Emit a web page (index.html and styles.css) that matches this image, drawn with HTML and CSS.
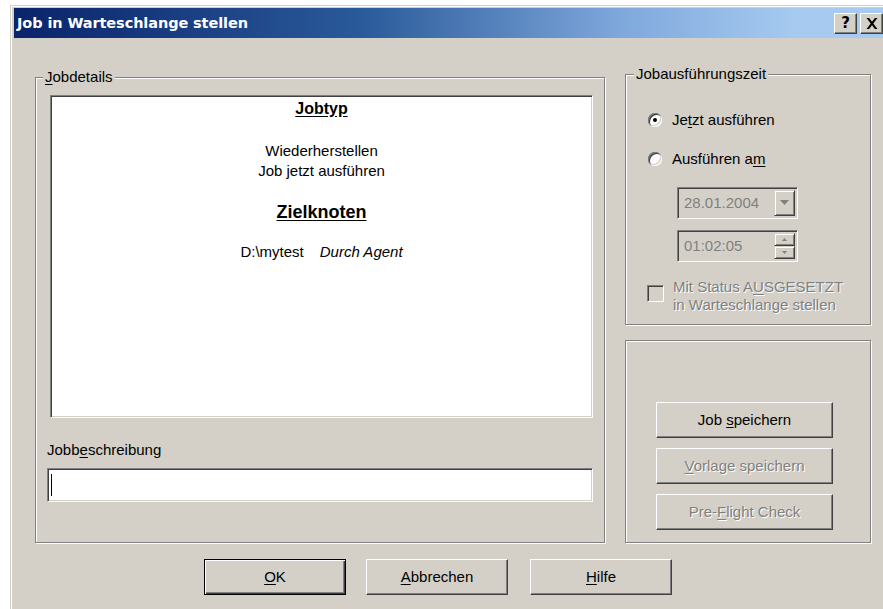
FILE: index.html
```html
<!DOCTYPE html>
<html lang="de">
<head>
<meta charset="utf-8">
<title>Job in Warteschlange stellen</title>
<link rel="stylesheet" href="styles.css">
</head>
<body>
<div class="dialog">
  <div class="titlebar">
    <span class="title">Job in Warteschlange stellen</span>
    <div class="caption-btns">
      <span class="cbtn">?</span>
      <span class="cbtn">
        <svg width="12" height="11" viewBox="0 0 12 11"><path d="M0.5 0h2.6L6 3.7 8.9 0h2.6L7.3 5.5 11.5 11H8.9L6 7.3 3.1 11H0.5l4.2-5.5z" fill="#000"/></svg>
      </span>
    </div>
  </div>

  <div class="client">
    <div class="main">
      <fieldset class="group details">
        <legend><u>J</u>obdetails</legend>
        <div class="summary">
          <div class="heading">Jobtyp</div>
          <div class="line first">Wiederherstellen</div>
          <div class="line">Job jetzt ausführen</div>
          <div class="heading big">Zielknoten</div>
          <div class="line target">D:\mytest<em class="agent">Durch Agent</em></div>
        </div>
        <div class="desc-label">Jobb<u>e</u>schreibung</div>
        <div class="textbox"><span class="caret"></span></div>
      </fieldset>

      <div class="side">
        <fieldset class="group schedule">
          <legend>Jobausführungszeit</legend>
          <div class="opt"><span class="radio checked"></span><span>Je<u>t</u>zt ausführen</span></div>
          <div class="opt second"><span class="radio"></span><span>Ausführen a<u>m</u></span></div>
          <div class="field date">
            <span class="value">28.01.2004</span>
            <span class="dropbtn">
              <svg width="9" height="6" viewBox="0 0 9 6"><path d="M0 0h9L4.5 5z" fill="#808080"/></svg>
            </span>
          </div>
          <div class="field time">
            <span class="value">01:02:05</span>
            <span class="spin">
              <span class="spinbtn"><svg width="5" height="3" viewBox="0 0 5 3"><path d="M2.5 0L5 3H0z" fill="#808080"/></svg></span>
              <span class="spinbtn"><svg width="5" height="3" viewBox="0 0 5 3"><path d="M0 0h5L2.5 3z" fill="#808080"/></svg></span>
            </span>
          </div>
          <div class="check-row">
            <span class="checkbox"></span>
            <span class="disabled">Mit Status A<u>U</u>SGESETZT<br>in Warteschlange stellen</span>
          </div>
        </fieldset>

        <div class="group actions">
          <span class="btn wide"><span>Job <u>s</u>peichern</span></span>
          <span class="btn wide off"><span><u>V</u>orlage speichern</span></span>
          <span class="btn wide off"><span>Pre-<u>F</u>light Check</span></span>
        </div>
      </div>
    </div>

    <div class="footer">
      <span class="btn default"><span><u>O</u>K</span></span>
      <span class="btn"><span><u>A</u>bbrechen</span></span>
      <span class="btn"><span><u>H</u>ilfe</span></span>
    </div>
  </div>
</div>
</body>
</html>
```

FILE: styles.css
```css
html, body {
  margin: 0;
  height: 100%;
  overflow: hidden;
  background: #fff;
}

body {
  font-family: "Liberation Sans", Arial, sans-serif;
  font-size: 15px;
  line-height: 18px;
  color: #000;
}

u { text-decoration: underline; text-underline-offset: 2px; }

/* window frame */
.dialog {
  margin: 5px 0 0 10px;
  height: 640px;
  box-sizing: border-box;
  background: #d4d0c8;
  border-top: 1px solid #d4d0c8;
  border-left: 1px solid #d4d0c8;
  box-shadow: inset 1px 1px #fff;
  padding: 2px 0 0 3px;
}

.titlebar {
  height: 30px;
  display: flex;
  align-items: center;
  padding-left: 3px;
  background: linear-gradient(to right, #0a246a 0%, #2a5a9a 40%, #7fa8dc 70%, #a6caf0 90%);
}

.title {
  flex: 1;
  color: #fff;
  font-family: "DejaVu Sans", Verdana, sans-serif;
  font-weight: bold;
  font-size: 14.5px;
  letter-spacing: -0.1px;
}

.caption-btns {
  display: flex;
  gap: 3px;
}

.cbtn {
  width: 23px;
  height: 21px;
  box-sizing: border-box;
  display: flex;
  align-items: center;
  justify-content: center;
  background: #d4d0c8;
  border: 1px solid;
  border-color: #fff #404040 #404040 #fff;
  box-shadow: inset -1px -1px #808080;
  font-family: "DejaVu Sans", sans-serif;
  font-weight: bold;
  font-size: 15px;
}

/* dialog client area */
.client {
  padding: 27px 0 0 21px;
}

.main {
  display: flex;
  align-items: flex-start;
  gap: 20px;
}

.group {
  margin: 0;
  box-sizing: border-box;
  border: 1px solid #808080;
  box-shadow: inset 1px 1px #fff, 1px 1px #fff;
}

legend {
  padding: 0 2px;
  line-height: 18px;
  background: #d4d0c8;
}

.details {
  width: 570px;
  margin-top: 3px;
  padding: 9px 11px 40px 14px;
}

.details legend { margin-left: -7px; }

.summary {
  height: 323px;
  box-sizing: border-box;
  background: #fff;
  border: 1px solid;
  border-color: #808080 #fff #fff #808080;
  box-shadow: inset 1px 1px #404040, inset -1px -1px #d4d0c8;
  text-align: center;
  padding-top: 4px;
}

.heading {
  font-weight: bold;
  font-size: 16px;
  line-height: 18px;
  text-decoration: underline;
  text-underline-offset: 2px;
}

.heading.big {
  font-size: 18px;
  line-height: 22px;
  margin-top: 20px;
}

.line { line-height: 20px; }
.line.first { margin-top: 23px; }
.line.target { margin-top: 19px; }

.agent {
  margin-left: 16px;
}

.desc-label {
  margin-top: 23px;
  margin-left: -3px;
}

.textbox {
  margin-top: 9px;
  margin-left: -3px;
  height: 34px;
  box-sizing: border-box;
  background: #fff;
  border: 1px solid;
  border-color: #808080 #fff #fff #808080;
  box-shadow: inset 1px 1px #404040, inset -1px -1px #d4d0c8;
  display: flex;
  align-items: center;
  padding-left: 3px;
}

.caret {
  width: 1px;
  height: 22px;
  background: #000;
}

/* right column */
.side {
  width: 246px;
  display: flex;
  flex-direction: column;
}

.schedule {
  padding: 27px 8px 10px 22px;
}

.schedule legend { margin-left: -14px; }

.opt {
  display: flex;
  align-items: center;
  gap: 10px;
  height: 20px;
}

.opt.second { margin-top: 19px; }

.radio {
  position: relative;
  width: 14px;
  height: 14px;
  border-radius: 50%;
  background: #fff;
  box-shadow: inset 1px 1px #808080, inset 2px 2px #404040, inset -1px -1px #fff, inset -2px -2px #d4d0c8;
}

.radio.checked::after {
  content: "";
  position: absolute;
  left: 5px;
  top: 5px;
  width: 4px;
  height: 4px;
  border-radius: 50%;
  background: #000;
}

.field {
  margin-left: 29px;
  width: 121px;
  height: 32px;
  box-sizing: border-box;
  border: 1px solid;
  border-color: #808080 #fff #fff #808080;
  box-shadow: inset 1px 1px #404040, inset -1px -1px #d4d0c8;
  display: flex;
  align-items: stretch;
  padding: 2px;
  color: #808080;
}

.field.date { margin-top: 18px; }
.field.time { margin-top: 11px; }

.field .value {
  flex: 1;
  display: flex;
  align-items: center;
  padding-left: 4px;
}

.dropbtn {
  width: 21px;
  box-sizing: border-box;
  display: flex;
  align-items: center;
  justify-content: center;
  border: 1px solid;
  border-color: #d4d0c8 #404040 #404040 #d4d0c8;
  box-shadow: inset 1px 1px #fff, inset -1px -1px #808080;
}

.spin {
  width: 21px;
  display: flex;
  flex-direction: column;
}

.spinbtn {
  flex: 1;
  box-sizing: border-box;
  display: flex;
  align-items: center;
  justify-content: center;
  border: 1px solid;
  border-color: #d4d0c8 #404040 #404040 #d4d0c8;
  box-shadow: inset 1px 1px #fff, inset -1px -1px #808080;
}

.check-row {
  margin-top: 16px;
  margin-left: -1px;
  display: flex;
  align-items: flex-start;
  gap: 9px;
}

.checkbox {
  flex: none;
  margin-top: 7px;
  width: 17px;
  height: 17px;
  box-sizing: border-box;
  background: #d4d0c8;
  border: 1px solid;
  border-color: #808080 #fff #fff #808080;
  box-shadow: inset 1px 1px #404040, inset -1px -1px #d4d0c8;
}

.disabled,
.btn.off {
  color: #808080;
  text-shadow: 1px 1px #fff;
}

.actions {
  margin-top: 15px;
  height: 203px;
  padding: 61px 0 0 30px;
  display: flex;
  flex-direction: column;
  gap: 10px;
}

/* push buttons */
.btn {
  width: 142px;
  height: 36px;
  box-sizing: border-box;
  display: flex;
  align-items: center;
  justify-content: center;
  background: #d4d0c8;
  border: 1px solid;
  border-color: #fff #404040 #404040 #fff;
  box-shadow: inset -1px -1px #808080;
}

.btn.wide { width: 177px; }

.btn.default {
  border: 1px solid #000;
  box-shadow: inset 1px 1px #fff, inset -1px -1px #404040, inset -2px -2px #808080;
}

.footer {
  margin-top: 16px;
  padding-left: 169px;
  display: flex;
  gap: 20px;
}

.footer .btn:last-child { margin-left: 2px; }
```
